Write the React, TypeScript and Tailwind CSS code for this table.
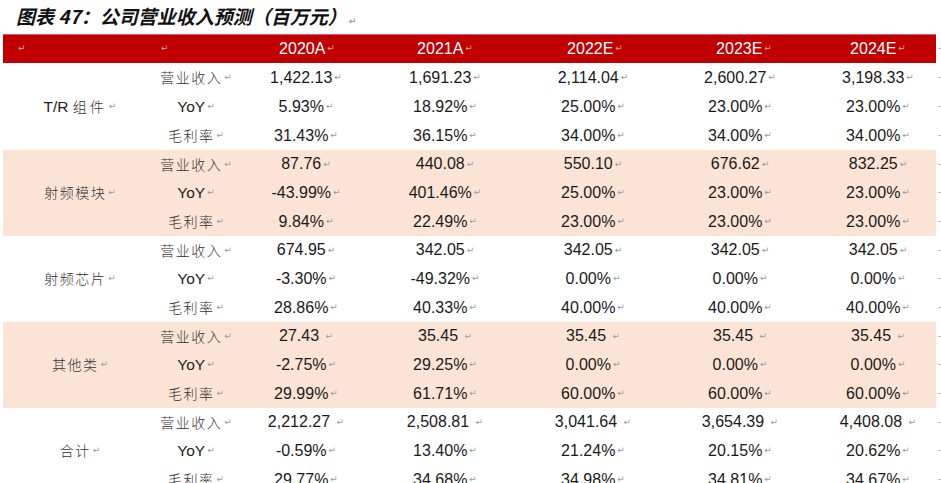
import React from "react";

const cols = "grid grid-cols-[154px_78px_142px_136px_160px_134px_129px_5px]";

type Group = { name: string; shaded: boolean; rows: string[][] };

const metrics = ["营业收入", "YoY", "毛利率"];

const groups: Group[] = [
    {
        name: "T/R 组件",
        shaded: false,
        rows: [
            ["1,422.13", "1,691.23", "2,114.04", "2,600.27", "3,198.33"],
            ["5.93%", "18.92%", "25.00%", "23.00%", "23.00%"],
            ["31.43%", "36.15%", "34.00%", "34.00%", "34.00%"],
        ],
    },
    {
        name: "射频模块",
        shaded: true,
        rows: [
            ["87.76", "440.08", "550.10", "676.62", "832.25"],
            ["-43.99%", "401.46%", "25.00%", "23.00%", "23.00%"],
            ["9.84%", "22.49%", "23.00%", "23.00%", "23.00%"],
        ],
    },
    {
        name: "射频芯片",
        shaded: false,
        rows: [
            ["674.95", "342.05", "342.05", "342.05", "342.05"],
            ["-3.30%", "-49.32%", "0.00%", "0.00%", "0.00%"],
            ["28.86%", "40.33%", "40.00%", "40.00%", "40.00%"],
        ],
    },
    {
        name: "其他类",
        shaded: true,
        rows: [
            ["27.43 ", "35.45 ", "35.45 ", "35.45 ", "35.45 "],
            ["-2.75%", "29.25%", "0.00%", "0.00%", "0.00%"],
            ["29.99%", "61.71%", "60.00%", "60.00%", "60.00%"],
        ],
    },
    {
        name: "合计",
        shaded: false,
        rows: [
            ["2,212.27 ", "2,508.81 ", "3,041.64 ", "3,654.39 ", "4,408.08 "],
            ["-0.59%", "13.40%", "21.24%", "20.15%", "20.62%"],
            ["29.77%", "34.68%", "34.98%", "34.81%", "34.67%"],
        ],
    },
];

// Word paragraph mark
function Ret({ light }: { light?: boolean }) {
    return (
        <span
            className={
                light
                    ? "ml-[2px] font-['DejaVu_Sans'] text-[9px] text-[#d0a8a8]"
                    : "ml-[2px] font-['DejaVu_Sans'] text-[9px] text-[#9a9a9a]"
            }
        >
            ↵
        </span>
    );
}

function Label({ text }: { text: string }) {
    // latin bits in Arial, CJK spaced out like the Word doc
    const isLatin = /^[A-Za-z/ ]+$/.test(text);
    if (isLatin) {
        return <span className="font-['Liberation_Sans'] text-[15.5px] text-[#222]">{text}</span>;
    }
    const m = text.match(/^([A-Za-z/]+ )(.*)$/);
    if (m) {
        return (
            <span>
                <span className="font-['Liberation_Sans'] text-[15.5px] text-[#222]">{m[1]}</span>
                <span className="font-['Noto_Sans_CJK_SC',sans-serif] text-[14px] font-light tracking-[3px] text-[#333]">{m[2]}</span>
            </span>
        );
    }
    return (
        <span className="font-['Noto_Sans_CJK_SC',sans-serif] text-[14px] font-light tracking-[1.5px] text-[#333]">{text}</span>
    );
}

const dataCell = [
    "flex items-center justify-center",
    "flex items-center justify-center",
    "flex items-center justify-center",
    "flex items-center justify-center",
    "flex items-center justify-center pl-[13px]",
];

export default function App() {
    return (
        <div className="w-[941px] h-[483px] overflow-hidden bg-white">
            {/* Title */}
            <div className="h-[34px] pl-[16px] pt-[3px] font-['Noto_Sans_CJK_SC',sans-serif] text-[19px] font-bold italic text-[#111] leading-[26px]">
                <span>图表 47：</span>
                <span>公司营业收入预测（百万元）</span>
                <Ret />
            </div>

            <div className="ml-[3px] w-[938px]">
                {/* Header */}
                <div className={`${cols} h-[29px]`}>
                    <div className="flex items-center bg-[#c00000] border-t border-[#e05a6a] pl-[13px]">
                        <Ret light />
                    </div>
                    <div className="flex items-center bg-[#c00000] border-t border-[#e05a6a] pl-[2px]">
                        <Ret light />
                    </div>
                    {["2020A", "2021A", "2022E", "2023E", "2024E"].map((y, i) => (
                        <div
                            key={y}
                            className={
                                [
                                    "flex items-center justify-center bg-[#c00000] border-t border-[#e05a6a] pl-[2px]",
                                    "flex items-center justify-center bg-[#c00000] border-t border-[#e05a6a]",
                                    "flex items-center justify-center bg-[#c00000] border-t border-[#e05a6a] pl-[4px]",
                                    "flex items-center justify-center bg-[#c00000] border-t border-[#e05a6a] pl-[8px]",
                                    "flex items-center justify-center bg-[#c00000] border-t border-[#e05a6a] pl-[13px]",
                                ][i]
                            }
                        >
                            <span className="font-['Liberation_Sans'] text-[16px] text-white">{y}</span>
                            <Ret light />
                        </div>
                    ))}
                    <div className="flex items-center justify-end">
                        <span className="h-px w-[3px] bg-[#bbb]" />
                    </div>
                </div>

                {/* Body */}
                {groups.map((g, gi) => (
                    <div
                        key={g.name}
                        className={`${cols} grid-rows-3 ${gi === 0 ? "h-[87px]" : "h-[86px]"}`}
                    >
                        <div className={`row-span-3 flex items-center justify-center ${g.shaded ? "bg-[#fbe4d6]" : ""}`}>
                            <Label text={g.name} />
                            <Ret />
                        </div>
                        {g.rows.map((r, ri) => (
                            <React.Fragment key={ri}>
                                <div className={`flex items-center justify-center ${g.shaded ? "bg-[#fbe4d6]" : ""}`}>
                                    <Label text={metrics[ri]} />
                                    <Ret />
                                </div>
                                {r.map((v, ci) => (
                                    <div key={ci} className={`${dataCell[ci]} ${g.shaded ? "bg-[#fbe4d6]" : ""}`}>
                                        <span className="whitespace-pre font-['Liberation_Sans'] text-[16px] text-[#1a1a1a]">{v}</span>
                                        <Ret />
                                    </div>
                                ))}
                                <div className="flex items-center justify-end">
                                    <span className="h-px w-[3px] bg-[#bbb]" />
                                </div>
                            </React.Fragment>
                        ))}
                    </div>
                ))}
            </div>
        </div>
    );
}
